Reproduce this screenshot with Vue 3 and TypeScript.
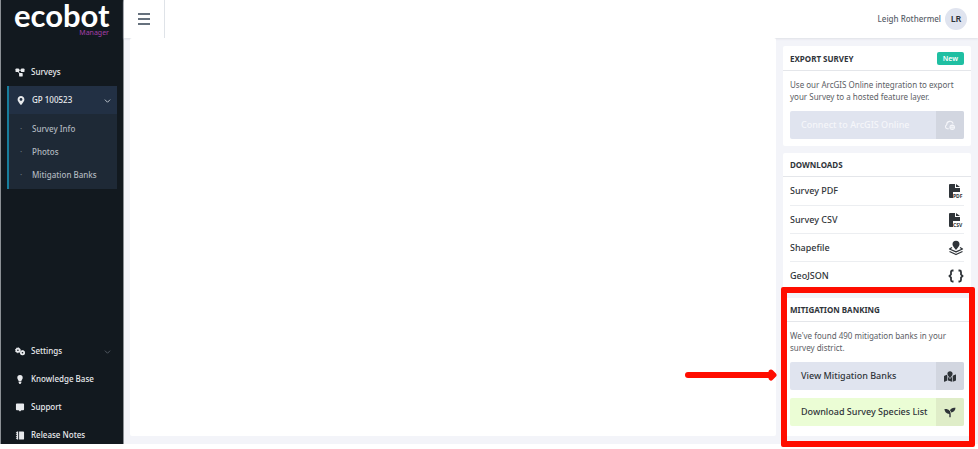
<script setup lang="ts">
import { ref } from 'vue'

const surveyOpen = ref(true)
const surveyPages: string[] = ['Survey Info', 'Photos', 'Mitigation Banks']

interface Download {
  label: string
  icon: 'file' | 'layers' | 'braces'
  tag?: string
}

const downloads: Download[] = [
  { label: 'Survey PDF', icon: 'file', tag: 'PDF' },
  { label: 'Survey CSV', icon: 'file', tag: 'CSV' },
  { label: 'Shapefile', icon: 'layers' },
  { label: 'GeoJSON', icon: 'braces' },
]
</script>

<template>
  <div class="shell">
    <aside class="sidebar">
      <div class="brand">
        <span class="brand-name">ecobot</span>
        <span class="brand-sub">Manager</span>
      </div>

      <nav class="menu" aria-label="Surveys">
        <a class="item" href="#surveys">
          <svg class="ico" viewBox="0 0 20 20" fill="currentColor">
            <path d="M4 5h12M4 5l7 10" fill="none" stroke="currentColor" stroke-width="2" />
            <rect x="0" y="1" width="8" height="8" rx="2" />
            <rect x="12" y="1" width="8" height="8" rx="2" />
            <rect x="8" y="11" width="8" height="8" rx="2" />
          </svg>
          <span>Surveys</span>
        </a>
        <div class="group">
          <button class="item current" type="button" :aria-expanded="surveyOpen" @click="surveyOpen = !surveyOpen">
            <svg class="ico" viewBox="0 0 384 512" fill="currentColor">
              <path d="M172.268 501.67C26.97 291.031 0 269.413 0 192 0 85.961 85.961 0 192 0s192 85.961 192 192c0 77.413-26.97 99.031-172.268 309.67-9.535 13.774-29.93 13.773-39.464 0zM192 272c44.183 0 80-35.817 80-80s-35.817-80-80-80-80 35.817-80 80 35.817 80 80 80z" />
            </svg>
            <span class="grow">GP 100523</span>
            <svg class="chev" viewBox="0 0 8 8"><path d="M1 3l3 3 3-3" /></svg>
          </button>
          <ul v-if="surveyOpen" class="sub">
            <li v-for="page in surveyPages" :key="page">
              <a href="#survey">{{ page }}</a>
            </li>
          </ul>
        </div>
      </nav>

      <nav class="menu bottom" aria-label="Support">
        <button class="item" type="button">
          <svg class="ico" viewBox="0 0 24 20">
            <g fill="none" stroke="currentColor">
              <circle cx="7" cy="7" r="4" stroke-width="4" />
              <circle cx="7" cy="7" r="6" stroke-width="2" stroke-dasharray="2.4 2.3" />
              <circle cx="18" cy="13" r="4" stroke-width="4" />
              <circle cx="18" cy="13" r="5" stroke-width="2" stroke-dasharray="2 1.9" />
            </g>
          </svg>
          <span class="grow">Settings</span>
          <svg class="chev dim" viewBox="0 0 8 8"><path d="M1 3l3 3 3-3" /></svg>
        </button>
        <a class="item" href="#knowledge">
          <svg class="ico" viewBox="0 0 20 20" fill="currentColor">
            <path d="M10 0a6 6 0 0 0-6 6c0 3 2.5 4.500 3 8h6c.5-3.500 3-5 3-8a6 6 0 0 0-6-6zM7 15h6v2l-2 3H9l-2-3z" />
          </svg>
          <span>Knowledge Base</span>
        </a>
        <a class="item" href="#support">
          <svg class="ico" viewBox="0 0 20 20" fill="currentColor">
            <path d="M3 1h14a2 2 0 0 1 2 2v11a2 2 0 0 1-2 2h-4l-3 3-3-3H3a2 2 0 0 1-2-2V3a2 2 0 0 1 2-2z" />
          </svg>
          <span>Support</span>
        </a>
        <a class="item" href="#releases">
          <svg class="ico" viewBox="0 0 20 20" fill="currentColor">
            <path d="M8 1h9a2 2 0 0 1 2 2v14a2 2 0 0 1-2 2H8zM3 1h3v18H3v-2H1v-2h2v-2H1v-2h2V9H1V7h2V5H1V3h2z" />
          </svg>
          <span>Release Notes</span>
        </a>
      </nav>
    </aside>

    <div class="page">
      <header class="topbar">
        <button class="burger" type="button" aria-label="Toggle menu">
          <svg viewBox="0 0 12 12"><path d="M0 1h12M0 6h12M0 11h12" /></svg>
        </button>
        <div class="user">
          <span>Leigh Rothermel</span>
          <span class="avatar">LR</span>
        </div>
      </header>

      <div class="content">
        <main class="canvas"></main>

        <div class="rail">
          <section class="card">
            <header class="card-head">
              <h2>Export Survey</h2>
              <span class="badge">New</span>
            </header>
            <div class="card-body">
              <p>Use our ArcGIS Online integration to export your Survey to a hosted feature layer.</p>
              <button class="action muted" type="button" disabled>
                <span class="action-label">Connect to ArcGIS Online</span>
                <span class="action-ico">
                  <svg viewBox="0 0 20 20">
                    <path d="M7 16H5a4 4 0 0 1-1-7.500A6 6 0 0 1 15.500 6" fill="none" stroke="currentColor" stroke-width="2" stroke-linecap="round" />
                    <circle cx="14" cy="13" r="5" fill="currentColor" />
                    <path d="M11 12h6M11 15h6" stroke="#d2d6e0" stroke-width="1" />
                  </svg>
                </span>
              </button>
            </div>
          </section>

          <section class="card">
            <header class="card-head"><h2>Downloads</h2></header>
            <ul class="downloads">
              <li v-for="d in downloads" :key="d.label">
                <a href="#download">
                  <span>{{ d.label }}</span>
                  <svg v-if="d.icon === 'file'" viewBox="0 0 16 16">
                    <path d="M2 1h5v4h5v4H5v6H2a1 1 0 0 1-1-1V2a1 1 0 0 1 1-1zM8 1l4 3H8z" fill="currentColor" />
                    <text x="5" y="15" font-size="5" font-weight="700" fill="currentColor">{{ d.tag }}</text>
                  </svg>
                  <svg v-else-if="d.icon === 'layers'" viewBox="0 0 16 16">
                    <path d="M8 10C5.500 7 4.500 5.800 4.500 4.300a3.500 3.500 0 0 1 7 0C11.500 5.800 10.500 7 8 10z" fill="currentColor" />
                    <path d="M4 7.500L1.500 9 8 11.800 14.500 9 12 7.500M1.500 11.500L8 14.500l6.500-3" fill="none" stroke="currentColor" stroke-width="1.300" stroke-linejoin="round" />
                  </svg>
                  <svg v-else viewBox="0 0 16 16">
                    <path d="M5.500 2.500h-1Q3 2.500 3 4v2.500L1.500 8 3 9.500V12q0 1.500 1.500 1.500h1M10.500 2.500h1Q13 2.500 13 4v2.500L14.500 8 13 9.500V12q0 1.500-1.500 1.500h-1" fill="none" stroke="currentColor" stroke-width="1.800" />
                  </svg>
                </a>
              </li>
            </ul>
          </section>

          <section class="card marked">
            <header class="card-head"><h2>Mitigation Banking</h2></header>
            <div class="card-body">
              <p>We've found 490 mitigation banks in your survey district.</p>
              <button class="action" type="button">
                <span class="action-label">View Mitigation Banks</span>
                <span class="action-ico">
                  <svg viewBox="0 0 576 512" fill="currentColor">
                    <path d="M288 0c-69.590 0-126 56.410-126 126 0 56.260 82.350 158.800 113.900 196.020 6.390 7.540 17.820 7.540 24.200 0C331.650 284.800 414 182.260 414 126 414 56.410 357.590 0 288 0zM20.120 215.950A32.006 32.006 0 0 0 0 245.660v250.320c0 11.320 11.430 19.060 21.940 14.860L160 448V214.920c-8.840-15.980-16.070-31.540-21.250-46.420L20.120 215.950zM288 359.670c-14.070 0-27.380-6.180-36.510-16.960-19.660-23.200-40.570-49.620-59.490-76.720v182l192 64V266c-18.920 27.090-39.820 53.520-59.490 76.720-9.130 10.770-22.440 16.950-36.510 16.950zm266.060-198.510L416 224v288l139.880-55.950A31.996 31.996 0 0 0 576 426.340V176.020c0-11.320-11.430-19.060-21.940-14.860z" />
                  </svg>
                </span>
              </button>
              <button class="action lime" type="button">
                <span class="action-label">Download Survey Species List</span>
                <span class="action-ico">
                  <svg viewBox="0 0 512 512" fill="currentColor">
                    <path d="M64 96H0c0 123.700 100.300 224 224 224v144c0 8.800 7.200 16 16 16h32c8.800 0 16-7.200 16-16V320C288 196.300 187.700 96 64 96zm384-64c-84.200 0-157.400 46.500-195.700 115.200 27.700 30.200 48.200 66.900 59 107.600C424 243.100 512 147.900 512 32h-64z" />
                  </svg>
                </span>
              </button>
            </div>
            <div class="frame" aria-hidden="true"></div>
            <svg class="arrow" viewBox="0 0 92 12" aria-hidden="true">
              <path d="M3 6h82" stroke-width="6" />
              <path d="M86 3l3 3-3 3z" stroke-width="5" />
            </svg>
          </section>
        </div>
      </div>
    </div>
  </div>
</template>

<style>
body {
  background: #fff;
}
</style>

<style scoped>
* {
  box-sizing: border-box;
}

.shell {
  display: grid;
  grid-template-columns: 124px 1fr;
  min-height: 100vh;
  border-bottom: 5px solid #fff;
  background: #f3f4f9;
  color: #2f3439;
  font-family: "Noto Sans", "Open Sans", sans-serif;
  font-size: 9px;
  line-height: 12px;
}

button {
  margin: 0;
  border: 0;
  background: none;
  color: inherit;
  font: inherit;
  text-align: left;
}

a {
  color: inherit;
  text-decoration: none;
}

ul,
h2,
p {
  margin: 0;
  padding: 0;
  list-style: none;
}

.sidebar {
  display: flex;
  flex-direction: column;
  justify-content: space-between;
  border-left: 1px solid #8b9095;
  border-right: 1px solid #8b9095;
  background: #12191f;
  color: #e8eaed;
}

.brand {
  display: flex;
  flex-direction: column;
  height: 58px;
  padding: 0 14px 0 13px;
  color: #fff;
}

.brand-name {
  font-family: Lato, sans-serif;
  font-size: 31px;
  font-weight: 700;
  line-height: 30px;
}

.brand-sub {
  align-self: flex-end;
  color: #a33fa6;
  font-size: 7px;
  line-height: 6px;
}

.menu {
  flex: 1;
  padding: 0 6px;
  font-size: 8px;
  font-weight: 500;
}

.menu.bottom {
  display: flex;
  flex: none;
  flex-direction: column;
  gap: 10px;
}

.item {
  display: flex;
  align-items: center;
  gap: 6px;
  width: 100%;
  height: 28px;
  padding: 0 6px 0 8px;
}

.menu.bottom .item {
  height: 18px;
}

.ico {
  width: 10px;
  height: 9px;
}

.grow {
  flex: 1;
}

.chev {
  width: 7px;
  height: 7px;
  fill: none;
  stroke: #cfd5dc;
}

.chev.dim {
  stroke: #59616a;
}

.group {
  border-left: 2px solid #177d9c;
  background: #1e2936;
}

.item.current {
  padding-left: 7px;
  background: #223044;
}

.sub {
  padding: 3px 0;
  color: #b0b7bf;
}

.sub a {
  display: flex;
  align-items: center;
  height: 23px;
}

.sub a::before {
  content: "·";
  width: 12px;
  padding-left: 11px;
  color: #66717c;
}

.page {
  display: flex;
  flex-direction: column;
  min-width: 0;
}

.topbar {
  display: flex;
  justify-content: space-between;
  height: 38px;
  background: #fff;
  box-shadow: 0 1px 2px #dfe1e6;
}

.burger {
  width: 41px;
  border-right: 1px solid #dfe3e8;
  padding: 0 14px;
}

.burger svg {
  display: block;
  width: 12px;
  height: 12px;
  fill: none;
  stroke: #66717d;
  stroke-width: 2;
}

.user {
  display: flex;
  align-items: center;
  gap: 4px;
  padding-right: 11px;
  color: #59616a;
  font-size: 8px;
  font-weight: 500;
}

.avatar {
  display: grid;
  place-items: center;
  width: 22px;
  height: 22px;
  border-radius: 50%;
  background: #e0e4ef;
  color: #2f3439;
  font-size: 9px;
  font-weight: 600;
}

.content {
  display: grid;
  flex: 1;
  grid-template-columns: 1fr 188px;
  gap: 7px;
  padding: 0 7px 8px 6px;
}

.canvas {
  border-radius: 2px;
  background: #fff;
}

.rail {
  display: flex;
  flex-direction: column;
  gap: 7px;
  padding-top: 8px;
}

.card {
  border-radius: 2px;
  background: #fff;
}

.card-head {
  display: flex;
  align-items: center;
  justify-content: space-between;
  padding: 6px 7px 5px;
  border-bottom: 1px solid #e4e6ea;
}

h2 {
  font-size: 8px;
  font-weight: 700;
  text-transform: uppercase;
}

.badge {
  padding: 0 6px;
  border-radius: 2px;
  background: #1fbfa2;
  color: #fff;
  font-size: 7px;
  font-weight: 600;
  line-height: 13px;
}

.card-body {
  display: flex;
  flex-direction: column;
  gap: 8px;
  padding: 8px 7px 7px;
}

.card-body p {
  color: #5b6065;
  font-size: 8px;
}

.action {
  display: flex;
  align-items: stretch;
  height: 28px;
  padding: 0;
  overflow: hidden;
  border-radius: 2px;
  background: #e0e4ef;
  color: #2f3439;
}

.action-label {
  flex: 1;
  align-self: center;
  padding-left: 11px;
  font-weight: 500;
  white-space: nowrap;
}

.action-ico {
  display: grid;
  place-items: center;
  width: 28px;
  background: #d2d6e0;
}

.action-ico svg {
  width: 12px;
  height: 11px;
}

.muted {
  color: #f5f6fa;
}

.lime {
  background: #ebfdd5;
}

.lime .action-ico {
  background: #dfedc8;
}

.downloads {
  padding: 0 7px 2px;
}

.downloads li {
  height: 28px;
}

.downloads a {
  display: flex;
  align-items: center;
  justify-content: space-between;
  height: 100%;
  font-weight: 500;
}

.downloads li + li {
  border-top: 1px solid #eceef1;
}

.downloads svg {
  width: 16px;
  height: 16px;
}

.marked {
  position: relative;
}

.marked .card-body {
  padding-bottom: 10px;
}

.frame {
  position: absolute;
  inset: -11px -4px -11px -2px;
  border: 6px solid #ff0d00;
  border-radius: 2px;
}

.arrow {
  position: absolute;
  top: 71px;
  left: -98px;
  width: 92px;
  height: 12px;
  fill: #ff0d00;
  stroke: #ff0d00;
  stroke-linejoin: round;
  stroke-linecap: round;
}
</style>
